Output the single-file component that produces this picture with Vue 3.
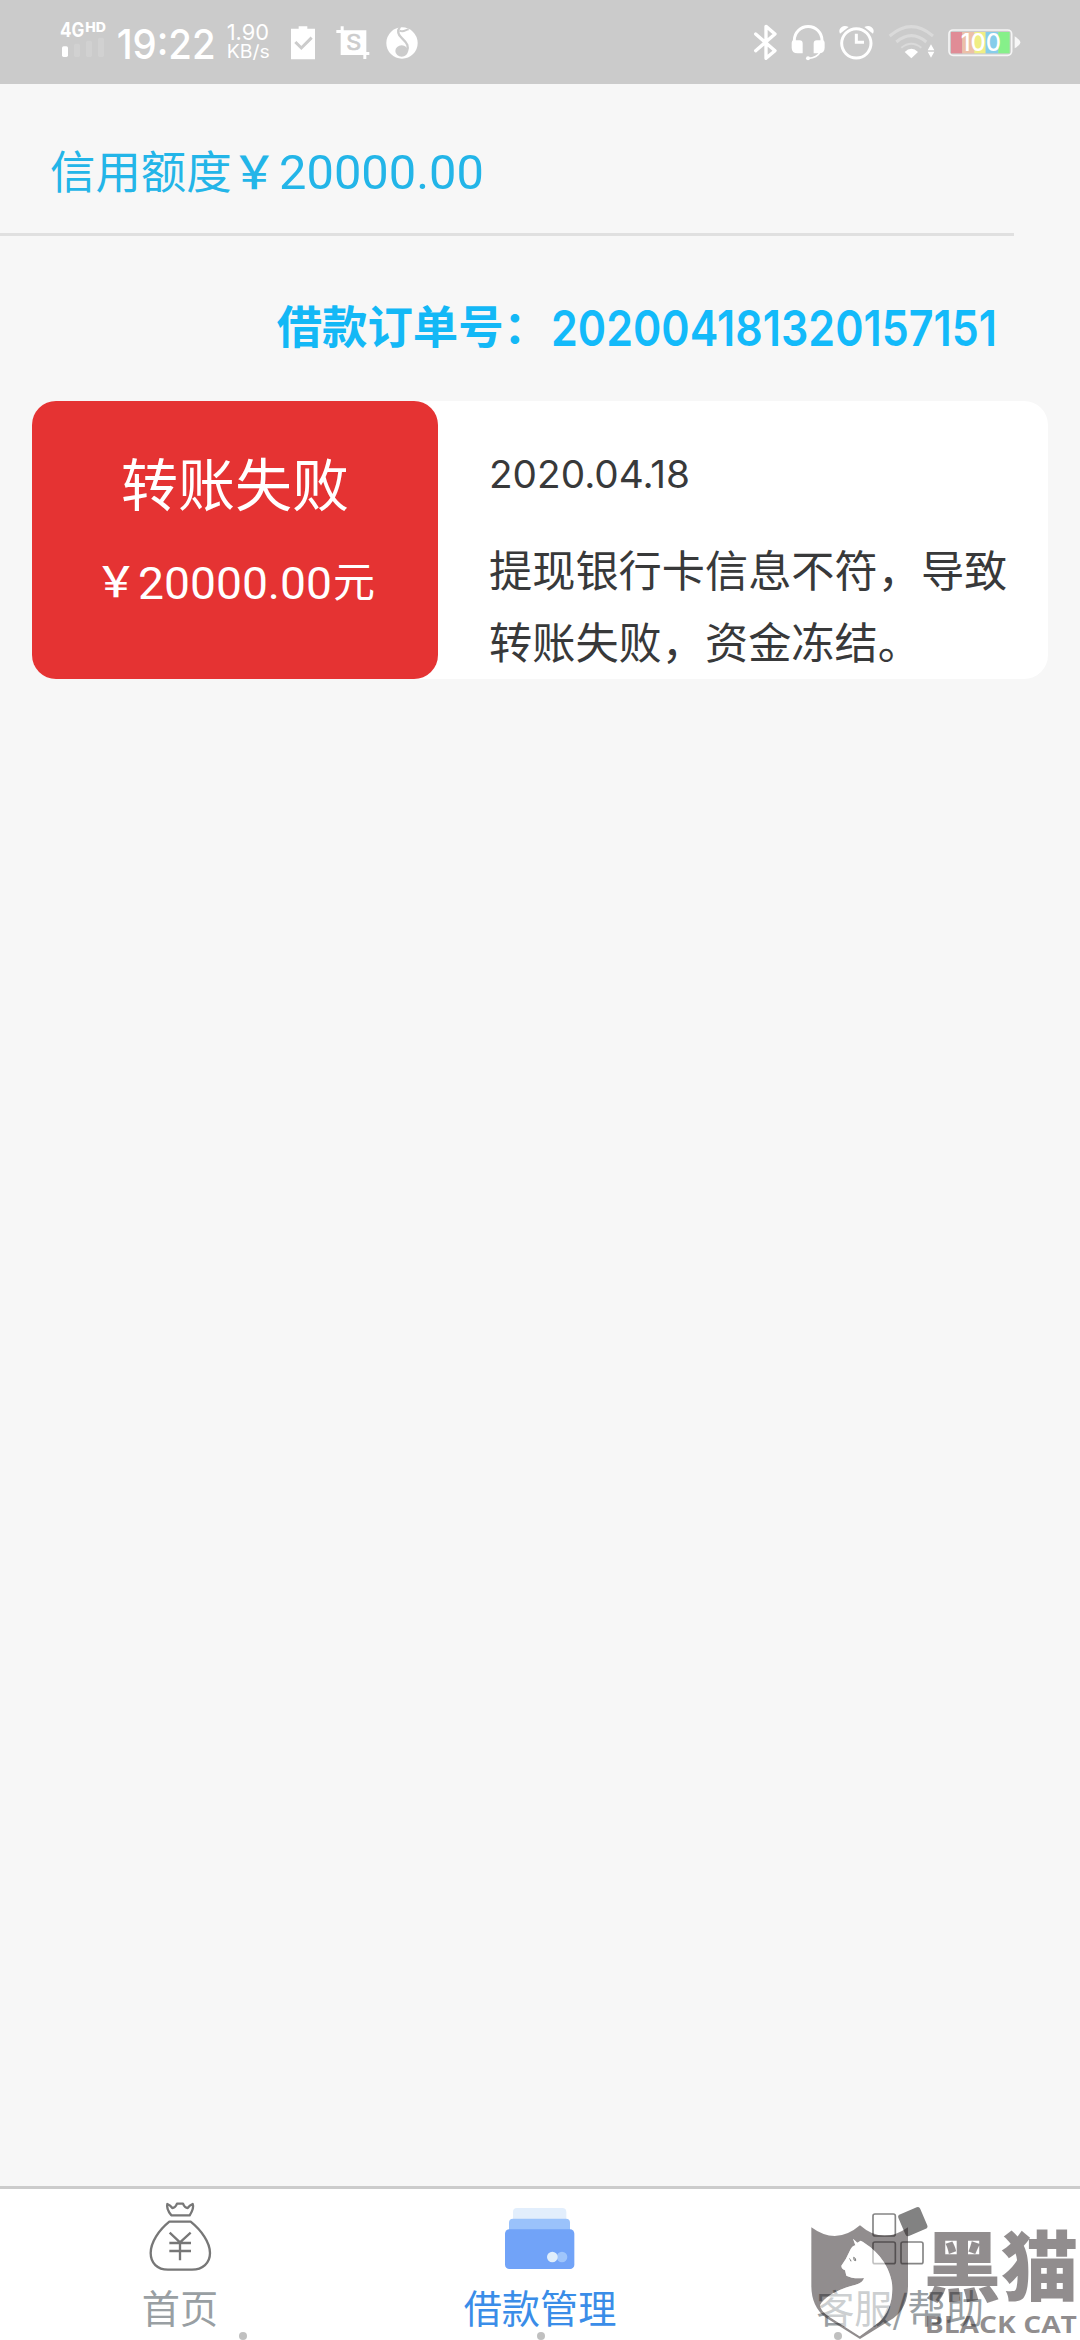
<script setup>
const credit = '20000.00'
const order = {
  id: '202004181320157151',
  status: '转账失败',
  amount: '20000.00',
  date: '2020.04.18',
  lines: ['提现银行卡信息不符，导致', '转账失败，资金冻结。'],
}
const signalBars = [
  { x: 66, y: 139, o: 1 },
  { x: 102, y: 131, o: 0.13 },
  { x: 138, y: 122, o: 0.13 },
  { x: 174, y: 113, o: 0.13 },
]
const batteryCells = [
  { x: 662, w: 34, c: '#e08c96' },
  { x: 696, w: 36, c: '#ecc0a8' },
  { x: 732, w: 34, c: '#f0ee84' },
  { x: 766, w: 38, c: '#86cdea' },
  { x: 804, w: 34, c: '#86f08a' },
]
const shield = 'M94 172q75 55 146-6 68 60 144 6v175q0 65-44 98l-100 62-102-64q-44-32-44-96z'
const cat = 'M219 206l13 12 10-6c38 20 86 66 94 128 5 52-12 92-39 117l-58 42-89-57q-28-17-30-36c12-26 58-50 107-62q22-6 25-20-35 3-53-7l-4-16q-11-5-11-14 16-22 24-42 9-19 18-19z'
</script>

<template>
  <div class="screen">
    <header class="status">
      <svg width="75" height="84" viewBox="0 0 225 252">
        <g fill="#fff" class="inter">
          <text x="60" y="110" font-size="59" font-weight="700" textLength="73" lengthAdjust="spacingAndGlyphs">4G</text>
          <text x="136" y="96" font-size="40" font-weight="800" textLength="62" lengthAdjust="spacingAndGlyphs">HD</text>
          <rect v-for="b in signalBars" :key="b.x" :x="b.x" :y="b.y" width="18" :height="171 - b.y" rx="5" :opacity="b.o" />
        </g>
      </svg>
      <svg width="105" height="84" viewBox="225 0 315 252">
        <text class="inter" x="230" y="177" font-size="123" font-weight="500" fill="#fff" textLength="297" lengthAdjust="spacingAndGlyphs">19:22</text>
      </svg>
      <svg width="60" height="84" viewBox="540 0 180 252">
        <g class="inter" fill="#fff">
          <text x="560" y="121" font-size="66" textLength="127" lengthAdjust="spacingAndGlyphs">1.90</text>
          <text x="560" y="175" font-size="54" textLength="129" lengthAdjust="spacingAndGlyphs">KB/s</text>
        </g>
      </svg>
      <svg width="46.667" height="84" viewBox="720 0 140 252">
        <path d="M753 86h23v-7h26v7h23v92h-72z" fill="#fff" />
        <path d="M766 126l18 18 31-31" fill="none" stroke="#ccc" stroke-width="9" />
      </svg>
      <svg width="50" height="84" viewBox="860 0 150 252">
        <path d="M901 79h9v12h68v65h9v9h-9v12h-9v-12h-68V99h-13v-9h13z" fill="#fff" />
        <text class="inter" x="918" y="151" font-size="64" fill="#ccc" stroke="#ccc" stroke-width="2" textLength="45" lengthAdjust="spacingAndGlyphs">S</text>
      </svg>
      <svg width="50" height="84" viewBox="1010 0 150 252">
        <circle cx="1085" cy="129" r="47" fill="#fff" />
        <path d="M1079 80c-10 14-6 25 7 36 15 14 20 23 14 38" fill="none" stroke="#ccc" stroke-width="7" />
        <path d="M1078 92c12 6 16-2 27-4" fill="none" stroke="#ccc" stroke-width="6" />
        <ellipse cx="1084" cy="153" rx="19" ry="17" fill="#ccc" />
      </svg>

      <svg class="right" width="36.667" height="84" viewBox="50 0 110 252">
        <path d="M76 102l58 50-27 23V79l27 23-58 50" fill="none" stroke="#fff" stroke-width="10" stroke-linejoin="round" stroke-linecap="round" />
      </svg>
      <svg width="48.333" height="84" viewBox="160 0 145 252">
        <path d="M194 126v-5a41 41 0 0 1 83 0v5" fill="none" stroke="#fff" stroke-width="9" />
        <path d="M193 121h17q9 0 9 9v30h-15q-18 0-18-17v-15q0-7 7-7zM278 121h-17q-9 0-9 9v30h15q18 0 18-17v-15q0-7-7-7z" fill="#fff" />
        <path d="M270 158q-7 15-34 17" fill="none" stroke="#fff" stroke-width="5" />
        <circle cx="235" cy="175" r="6" fill="#fff" />
      </svg>
      <svg width="50" height="84" viewBox="305 0 150 252">
        <circle cx="378" cy="130" r="44" fill="none" stroke="#fff" stroke-width="9" />
        <path d="M378 101v26h23" fill="none" stroke="#fff" stroke-width="9" />
        <path d="M329 101q-6-12 5-20 9-6 21 0zM428 101q6-12-5-20-9-6-21 0z" fill="#fff" />
      </svg>
      <svg width="60" height="84" viewBox="455 0 180 252">
        <g fill="none" stroke="#dadada" stroke-width="9">
          <path d="M478 108q65-56 130 0" />
          <path d="M498 126q45-38 90 0" />
          <path d="M513 143q30-24 60 0" stroke-width="6" />
        </g>
        <path d="M523 156q20-19 40 0l-20 19z" fill="#fff" />
        <path d="M592 151l10-18 10 18zM592 155l10 18 10-18z" fill="#fff" />
      </svg>
      <svg width="83.333" height="84" viewBox="635 0 250 252">
        <rect x="656" y="90" width="188" height="76" rx="12" fill="#ccc" stroke="#fff" stroke-opacity=".8" stroke-width="5" />
        <rect v-for="c in batteryCells" :key="c.x" :x="c.x" y="96" :width="c.w" height="64" :fill="c.c" />
        <path d="M853 109q17 10 17 18t-17 18z" fill="#fff" opacity=".85" />
        <text class="inter" x="691" y="153" font-size="72" font-weight="500" fill="#fff" textLength="121" lengthAdjust="spacingAndGlyphs">100</text>
      </svg>
    </header>

    <section class="credit">
      <span>信用额度<b class="yen">￥</b></span>
      <svg width="206" height="60" viewBox="0 0 206 60">
        <text class="roboto" x="1" y="46" font-size="49" fill="#23b5e8" textLength="205" lengthAdjust="spacingAndGlyphs">{{ credit }}</text>
      </svg>
    </section>

    <section class="order-id">
      <span>借款订单号：</span>
      <svg width="450" height="60" viewBox="0 0 450 60">
        <text class="inter" x="2" y="46" font-size="50" font-weight="600" fill="#13bafa" textLength="446" lengthAdjust="spacingAndGlyphs">{{ order.id }}</text>
      </svg>
    </section>

    <article class="card">
      <div class="result">
        <div class="result-title">{{ order.status }}</div>
        <div class="result-amount">
          <span><b class="yen">￥</b></span>
          <svg width="196" height="54" viewBox="0 0 196 54">
            <text class="roboto" x="1" y="41" font-size="45" fill="#fff" textLength="194" lengthAdjust="spacingAndGlyphs">{{ order.amount }}</text>
          </svg>
          <span>元</span>
        </div>
      </div>
      <div class="detail">
        <svg width="208" height="50" viewBox="0 0 208 50">
          <text class="inter" x="0" y="38" font-size="38.5" fill="#38393a" textLength="201" lengthAdjust="spacingAndGlyphs">{{ order.date }}</text>
        </svg>
        <div class="reason">
          <div v-for="line in order.lines" :key="line">{{ line }}</div>
        </div>
      </div>
    </article>

    <nav class="tabs">
      <div class="tab">
        <svg width="100" height="92" viewBox="90 57 300 276">
          <g fill="none" stroke="#777" stroke-width="7" stroke-linejoin="round">
            <path d="M202 102q9 4 15 12 9 0 14-13h18q5 13 14 13 6-8 15-12 5 12-9 34h-55q-16-20-12-34z" />
            <path d="M208 155h64c32 26 58 62 58 94 0 30-22 50-54 50h-72c-32 0-52-20-52-50 0-32 24-68 56-94z" />
            <path d="M209 188l31 29 32-29M208 219h65M208 243h65M240 216v55" />
          </g>
        </svg>
        <span>首页</span>
      </div>
      <div class="tab active">
        <svg width="100" height="92" viewBox="210 57 300 276">
          <rect x="279" y="114" width="160" height="60" rx="12" fill="#e2eefc" />
          <rect x="267" y="146" width="183" height="60" rx="12" fill="#9ac2fb" />
          <rect x="255" y="178" width="208" height="119" rx="13" fill="#71a3f8" />
          <circle cx="426" cy="261" r="16" fill="#9fc5fb" />
          <circle cx="397" cy="261" r="16" fill="#e0eefb" />
        </svg>
        <span>借款管理</span>
      </div>
      <div class="tab">
        <svg width="100" height="92" viewBox="210 57 300 276">
          <g fill="none" stroke="#858585" stroke-width="5">
            <rect x="279" y="132" width="67" height="66" rx="6" />
            <rect x="279" y="216" width="67" height="65" rx="6" />
            <rect x="363" y="216" width="66" height="65" rx="6" />
          </g>
          <rect x="363" y="120" width="71" height="70" rx="8" fill="#828282" transform="rotate(-23 398 155)" />
        </svg>
        <span>客服/帮助</span>
      </div>
      <div class="dots"><i></i><i></i><i></i></div>

      <svg class="watermark" width="300" height="170" viewBox="0 0 900 510">
        <path :d="shield + cat" fill="#231c1e" fill-opacity=".5" fill-rule="evenodd" />
        <path :d="cat" fill="#fff" fill-opacity=".5" />
        <path d="M208 266q4 2 5 8M221 262q8 3 6 10-6 2-6-10" fill="none" stroke="#777" stroke-width="3" />
        <g fill="#231c1e" fill-opacity=".5">
          <text class="cjk" x="431" y="376" font-size="228" font-weight="900" textLength="464" lengthAdjust="spacingAndGlyphs">黑猫</text>
          <text class="sans" x="434" y="488" font-size="67" font-weight="700" textLength="457" lengthAdjust="spacingAndGlyphs">BLACK CAT</text>
        </g>
      </svg>
    </nav>
  </div>
</template>

<style>
body { margin: 0; background: #f7f7f7; }
</style>

<style scoped>
.screen {
  width: 1080px;
  height: 2340px;
  display: flex;
  flex-direction: column;
  overflow: hidden;
  background: #f7f7f7;
  font-family: "Noto Sans CJK SC", "Noto Sans", sans-serif;
}
svg { display: block; flex: none; overflow: visible; }
.inter { font-family: Inter, sans-serif; }
.roboto { font-family: Roboto, sans-serif; }
.cjk { font-family: "Noto Sans CJK SC", sans-serif; }
.sans { font-family: "Open Sans", sans-serif; }
.yen { font-weight: 500; }
.status {
  height: 84px;
  flex: none;
  box-sizing: border-box;
  display: flex;
  padding: 0 55px 0 40px;
  background: #cbcbcb;
}
.right { margin-left: auto; }
.credit {
  width: 1014px;
  height: 152px;
  box-sizing: border-box;
  flex: none;
  display: flex;
  padding: 53px 0 0 50px;
  border-bottom: 3px solid #e0e0e0;
  color: #23b5e8;
  font-size: 45.4px;
  line-height: 64px;
}
.credit svg { margin-left: 1px; margin-top: 6px; }
.order-id {
  height: 165px;
  box-sizing: border-box;
  flex: none;
  display: flex;
  justify-content: flex-end;
  padding: 56px 81px 0 0;
  color: #13b8f6;
  font-size: 45.4px;
  font-weight: 700;
  line-height: 64px;
}
.order-id svg { margin-top: 8px; }
.card {
  display: flex;
  flex: none;
  width: 1016px;
  height: 278px;
  margin-left: 32px;
  border-radius: 24px;
  background: #fff;
}
.result {
  width: 406px;
  box-sizing: border-box;
  padding-top: 40px;
  border-radius: 24px;
  background: #e53333;
  color: #fff;
  text-align: center;
}
.result-title { font-size: 57px; line-height: 80px; }
.result-amount {
  display: flex;
  justify-content: center;
  margin-top: 28px;
  font-size: 42px;
  line-height: 60px;
}
.result-amount svg { margin-top: 9px; }
.detail { padding: 49px 0 0 51px; color: #38393a; }
.reason { margin-top: 33px; font-size: 43.2px; line-height: 71.5px; white-space: nowrap; }
.tabs {
  position: relative;
  display: flex;
  height: 154px;
  box-sizing: border-box;
  margin-top: auto;
  border-top: 3px solid #ccc;
  background: #fff;
}
.tab {
  flex: 1;
  display: flex;
  flex-direction: column;
  align-items: center;
  color: #999fa3;
  font-size: 38.2px;
  line-height: 52px;
}
.tab span { white-space: nowrap; }
.active { color: #3a8de8; }
.dots {
  position: absolute;
  left: 239px;
  bottom: 0;
  width: 603px;
  display: flex;
  justify-content: space-between;
}
.dots i { width: 8px; height: 8px; border-radius: 50%; background: #c0c0c0; }
.watermark { position: absolute; right: 0; bottom: 0; }
</style>
